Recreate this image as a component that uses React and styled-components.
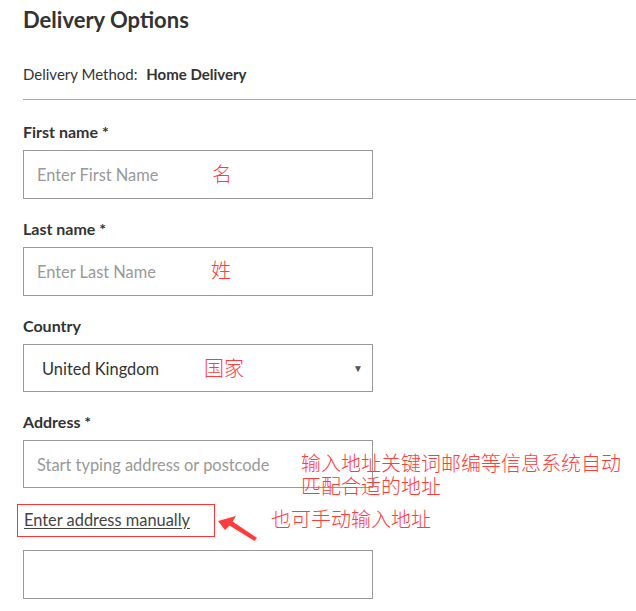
import React from "react";
import styled, { createGlobalStyle } from "styled-components";

const Global = createGlobalStyle`
  html, body { margin: 0; padding: 0; background: #fff; }
  body { font-family: Lato, "Open Sans", sans-serif; color: #333; }
`;

const Page = styled.div`
  padding: 0 0 0 23px;
  width: 613px;
`;

const Title = styled.h1`
  margin: 0;
  padding-top: 6px;
  font-size: 22px;
  line-height: 28px;
  font-weight: 700;
  color: #333;
`;

const Method = styled.div`
  margin-top: 31px;
  font-size: 15px;
  line-height: 18px;
  color: #333;
  b { font-weight: 700; margin-left: 5px; }
`;

const Rule = styled.hr`
  margin: 16px 0 0 0;
  border: 0;
  border-top: 1px solid #aaa;
  height: 0;
`;

const Form = styled.div`
  display: flex;
  flex-direction: column;
  padding-top: 22px;
`;

const Field = styled.div`
  display: flex;
  flex-direction: column;
  margin-bottom: ${(p) => p.$mb ?? 20}px;
`;

const Label = styled.label`
  font-size: 16px;
  line-height: 20px;
  font-weight: 700;
  color: #333;
  margin-bottom: 8px;
`;

const Box = styled.div`
  position: relative;
  box-sizing: border-box;
  width: 350px;
  height: ${(p) => p.$h || 49}px;
  border: 1px solid #999;
  display: flex;
  align-items: center;
  padding-left: ${(p) => p.$pl || 13}px;
  font-size: 16.4px;
  color: ${(p) => (p.$value ? "#333" : "#999")};
`;

const Caret = styled.span`
  position: absolute;
  right: 9px;
  top: 50%;
  transform: translateY(-50%);
  font-size: 10px;
  color: #555;
`;

const Note = styled.div`
  position: absolute;
  left: ${(p) => p.$x}px;
  top: ${(p) => p.$y}px;
  font-family: "Noto Sans CJK SC", sans-serif;
  font-size: 20px;
  line-height: 23px;
  font-weight: 300;
  color: #ff3b3b;
  white-space: nowrap;
`;

const ManualRow = styled.div`
  position: relative;
  height: 33px;
  margin-left: -6px;
  margin-bottom: 13px;
`;

const ManualLink = styled.a`
  display: inline-block;
  box-sizing: border-box;
  height: 33px;
  width: 198px;
  border: 1px solid #f33;
  padding: 5px 0 0 6px;
  font-size: 16.4px;
  line-height: 20px;
  color: #444;
  text-decoration: underline;
  text-underline-offset: 2px;
`;

const Arrow = styled.svg`
  position: absolute;
  left: 200px;
  top: 9px;
`;

export default function App() {
  return (
    <Page>
      <Global />
      <Title>Delivery Options</Title>
      <Method>
        Delivery Method: <b>Home Delivery</b>
      </Method>
      <Rule />
      <Form>
        <Field>
          <Label>First name *</Label>
          <Box>
            Enter First Name
            <Note $x={188} $y={11}>名</Note>
          </Box>
        </Field>
        <Field>
          <Label>Last name *</Label>
          <Box>
            Enter Last Name
            <Note $x={187} $y={10}>姓</Note>
          </Box>
        </Field>
        <Field>
          <Label>Country</Label>
          <Box $value $pl={18} $h={48}>
            United Kingdom
            <Note $x={180} $y={11}>国家</Note>
            <Caret>▼</Caret>
          </Box>
        </Field>
        <Field $mb={16}>
          <Label>Address *</Label>
          <Box $h={48}>
            Start typing address or postcode
            <Note $x={277} $y={10}>
              输入地址关键词邮编等信息系统自动
              <br />
              匹配合适的地址
            </Note>
          </Box>
        </Field>
        <ManualRow>
          <ManualLink>Enter address manually</ManualLink>
          <Arrow width="80" height="30" viewBox="0 0 80 30">
            <path d="M1 8 L19 3 L15.5 8.5 L40 25 L37.5 28 L12.5 12.5 L8 17 Z" fill="#ff3b3b" />
          </Arrow>
          <Note $x={254} $y={3}>也可手动输入地址</Note>
        </ManualRow>
        <Box />
      </Form>
    </Page>
  );
}
